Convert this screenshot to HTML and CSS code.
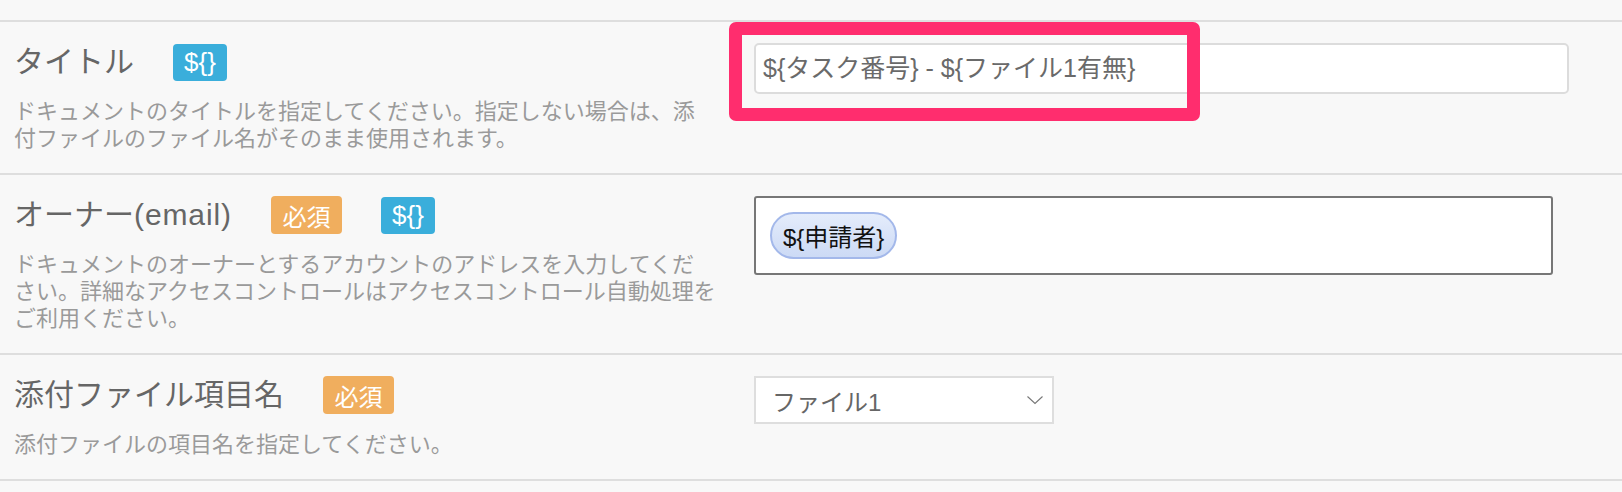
FILE: index.html
```html
<!DOCTYPE html>
<html lang="ja">
<head>
<meta charset="utf-8">
<title>設定</title>
<link rel="stylesheet" href="styles.css">
</head>
<body>
<div class="form">
  <div class="row">
    <div class="label-col">
      <div class="head">
        <span class="title">タイトル</span>
        <span class="badge badge-var">${}</span>
      </div>
      <p class="desc">ドキュメントのタイトルを指定してください。指定しない場合は、添<br>付ファイルのファイル名がそのまま使用されます。</p>
    </div>
    <div class="field-col">
      <div class="field-wrap">
        <div class="text-input">${タスク番号} - ${ファイル1有無}</div>
        <div class="highlight"></div>
      </div>
    </div>
  </div>

  <div class="row">
    <div class="label-col">
      <div class="head">
        <span class="title">オーナー<span class="latin">(email)</span></span>
        <span class="badge badge-req">必須</span>
        <span class="badge badge-var">${}</span>
      </div>
      <p class="desc">ドキュメントのオーナーとするアカウントのアドレスを入力してくだ<br>さい。詳細なアクセスコントロールはアクセスコントロール自動処理を<br>ご利用ください。</p>
    </div>
    <div class="field-col">
      <div class="chip-input">
        <span class="chip">${申請者}</span>
      </div>
    </div>
  </div>

  <div class="row">
    <div class="label-col">
      <div class="head">
        <span class="title">添付ファイル項目名</span>
        <span class="badge badge-req">必須</span>
      </div>
      <p class="desc">添付ファイルの項目名を指定してください。</p>
    </div>
    <div class="field-col">
      <div class="select">
        <span class="select-text">ファイル1</span>
        <svg class="chevron" width="18" height="10" viewBox="0 0 18 10"><path d="M1.5 1.5 L9 8.5 L16.5 1.5" fill="none" stroke="#777" stroke-width="1.1"/></svg>
      </div>
    </div>
  </div>
</div>
</body>
</html>
```
FILE: styles.css
```css
* { box-sizing: border-box; }
html, body {
  margin: 0;
  padding: 0;
  background: #f8f8f8;
}
body {
  font-family: "Liberation Sans", "Noto Sans CJK JP", sans-serif;
  color: #666;
}
.form {
  padding-top: 20px;
}
.row {
  display: grid;
  grid-template-columns: 740px 1fr;
  padding: 21px 0 21px 14px;
  border-top: 2px solid #dedede;
}
.row:last-child {
  border-bottom: 2px solid #dedede;
}
.head {
  display: flex;
  align-items: center;
  height: 38px;
}
.title {
  font-size: 30px;
  line-height: 38px;
  color: #666;
  white-space: nowrap;
}
.latin {
  letter-spacing: 0.9px;
}
.badge {
  display: inline-flex;
  align-items: center;
  justify-content: center;
  height: 38px;
  margin-left: 39px;
  padding: 0 11px;
  border-radius: 4px;
  color: #fff;
}
.badge-var {
  background: #3aaedb;
  font-size: 26px;
  height: 37px;
}
.badge-req {
  background: #f0ae5e;
  font-size: 24px;
  padding: 0 11.5px;
}
.desc {
  margin: 17px 0 0;
  font-size: 22px;
  line-height: 27px;
  color: #9a9a9a;
  white-space: nowrap;
}
.field-col {
  min-width: 0;
}
.field-wrap {
  position: relative;
  width: 815px;
}
.text-input {
  width: 815px;
  height: 51px;
  border: 2px solid #dcdcdc;
  border-radius: 5px;
  background: #fff;
  padding: 0 7px;
  font-size: 25px;
  line-height: 47px;
  color: #6a6a6a;
  white-space: nowrap;
}
.highlight {
  position: absolute;
  left: -25px;
  top: -21px;
  width: 471px;
  height: 99px;
  border: 13px solid #ff2d6e;
  border-radius: 7px;
  pointer-events: none;
}
.chip-input {
  width: 799px;
  height: 79px;
  border: 2px solid #777;
  border-radius: 3px;
  background: #fff;
  padding: 14px;
  display: flex;
  align-items: flex-start;
}
.chip {
  display: inline-flex;
  align-items: center;
  height: 47px;
  padding: 0 11px;
  border: 2px solid #a3b8ea;
  border-radius: 24px;
  background: linear-gradient(#e4ecfb, #ccdaf5);
  color: #111;
  font-size: 24px;
}
.select {
  width: 300px;
  height: 48px;
  border: 2px solid #dedede;
  background: #fff;
  display: flex;
  align-items: center;
  justify-content: space-between;
  padding: 0 8px 0 16px;
}
.select-text {
  font-size: 24px;
  color: #666;
}
.chevron {
  display: block;
}
```
